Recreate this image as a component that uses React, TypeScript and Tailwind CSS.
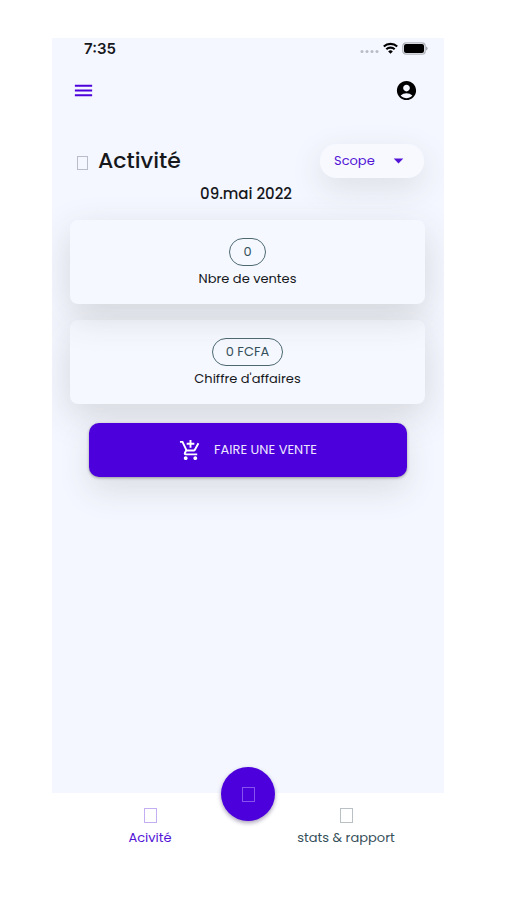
import React from "react";
import {
  MdAccountCircle,
  MdArrowDropDown,
  MdMenu,
  MdOutlineAddShoppingCart,
} from "react-icons/md";

function Glyph({ className }: { className: string }) {
  return <span aria-hidden="true" className={`block border ${className}`} />;
}

function StatusBar() {
  return (
    <div className="flex h-5 items-center justify-between pr-4 pl-8">
      <span className="pt-[2px] font-['Inter',sans-serif] text-[15px] leading-5 font-semibold">7:35</span>
      <div className="flex items-center gap-1">
        <svg width="19" height="14" viewBox="0 0 19 14" fill="#b9bcc6" aria-hidden="true">
          <circle cx="2" cy="10.5" r="1.5" />
          <circle cx="7" cy="10.5" r="1.5" />
          <circle cx="12" cy="10.5" r="1.5" />
          <circle cx="17" cy="10.5" r="1.5" />
        </svg>
        <svg width="15" height="12" viewBox="0 0 15 12" fill="none" stroke="#000" strokeWidth="2.1" aria-hidden="true">
          <path d="M.8 4.6a9.6 9.6 0 0 1 13.4 0" />
          <path d="M3.3 7.3a6 6 0 0 1 8.4 0" />
          <path d="M7.5 11.8 5.2 9.4a3.3 3.3 0 0 1 4.6 0z" fill="#000" stroke="none" />
        </svg>
        <svg width="26" height="13" viewBox="0 0 26 13" aria-hidden="true">
          <rect x=".8" y=".8" width="22.4" height="11.4" rx="3.2" fill="#f4f7ff" stroke="#b4b6bd" strokeWidth="1.3" />
          <rect x="2" y="2" width="20" height="9" rx="2" fill="#000" />
          <path d="M24.4 4.6c1.4.6 1.4 3.2 0 3.8z" fill="#777a80" />
        </svg>
      </div>
    </div>
  );
}

function StatCard({ value, label, className }: { value: string; label: string; className: string }) {
  return (
    <section
      className={`flex h-[84px] flex-col items-center rounded-lg bg-[#f5f8ff] pt-[18px] shadow-[0_12px_36px_rgba(60,60,50,0.17)] ${className}`}
    >
      <span className="flex h-7 items-center rounded-full border border-[#4d6871] px-[13px] text-[13px] text-[#36505a]">
        {value}
      </span>
      <span className="mt-[3px] text-[13px] leading-5">{label}</span>
    </section>
  );
}

export default function App() {
  return (
    <div className="min-h-screen bg-white pt-[38px] pr-[63px] pl-[52px] font-['Poppins','Inter',sans-serif] text-[#17181c]">
      <main className="flex min-h-[755px] flex-col overflow-hidden bg-[#f4f7ff]">
        <StatusBar />
        <header className="mt-5 flex h-6 items-center justify-between pr-[26px] pl-5">
          <button type="button" aria-label="Menu" className="text-[#4b00dc]">
            <MdMenu size={23} />
          </button>
          <button type="button" aria-label="Compte" className="text-black">
            <MdAccountCircle size={23} />
          </button>
        </header>

        <div className="mt-[42px] flex items-center justify-between pr-5 pl-[25px]">
          <div className="flex items-center gap-[10px]">
            <Glyph className="mt-1 h-[14px] w-[11px] border-[#b9bdc9]" />
            <h1 className="text-[22px] leading-[34px] font-medium">Activité</h1>
          </div>
          <div className="relative h-[34px] w-[104px] rounded-2xl bg-[#f7f9ff] text-[#5314d6] shadow-[0_10px_32px_rgba(60,60,50,0.13)]">
            <select
              aria-label="Scope"
              className="h-full w-full appearance-none rounded-2xl bg-transparent pl-[14px] text-[13px] outline-none"
            >
              <option>Scope</option>
            </select>
            <MdArrowDropDown size={23} className="pointer-events-none absolute top-[5px] right-[14px]" />
          </div>
        </div>

        <p className="mt-1 pr-1 text-center text-[15px] leading-6 font-medium">09.mai 2022</p>

        <div className="mt-[14px] flex flex-col gap-4 pr-[19px] pl-[18px]">
          <StatCard value="0" label="Nbre de ventes" className="z-10" />
          <StatCard value="0 FCFA" label="Chiffre d'affaires" className="z-0" />
        </div>

        <button
          type="button"
          className="z-10 mx-[37px] mt-[19px] flex h-[54px] items-center justify-center gap-3 rounded-[10px] bg-[#4b00dc] text-[13px] text-[#eee6ff] shadow-[0_1px_3px_rgba(40,40,40,0.4),0_14px_32px_rgba(60,60,50,0.13)]"
        >
          <MdOutlineAddShoppingCart size={23} className="text-white" />
          FAIRE UNE VENTE
        </button>
      </main>

      <nav className="relative grid grid-cols-2 pt-[15px] text-[13px]">
        <a href="#activite" className="flex flex-col items-center gap-[5px] leading-5 text-[#5314d6]">
          <Glyph className="h-[15px] w-[13px] border-[#c3aef3]" />
          Acivité
        </a>
        <a href="#stats" className="flex flex-col items-center gap-[5px] leading-5 text-[#36505a]">
          <Glyph className="h-[15px] w-[13px] border-[#b9c1c5]" />
          stats &amp; rapport
        </a>
        <button
          type="button"
          aria-label="Ajouter"
          className="absolute -top-[26px] left-1/2 flex size-[54px] -translate-x-1/2 items-center justify-center rounded-full bg-[#4b00dc] shadow-[0_2px_4px_rgba(40,20,80,0.4)]"
        >
          <Glyph className="h-[15px] w-[13px] border-[#8752ee]" />
        </button>
      </nav>
    </div>
  );
}
